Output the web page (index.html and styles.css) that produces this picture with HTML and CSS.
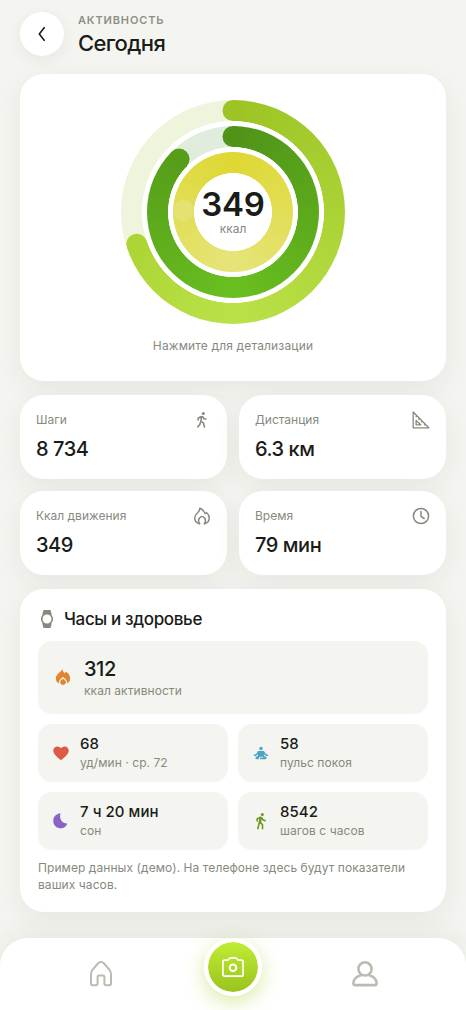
FILE: index.html
```html
<!DOCTYPE html>
<html lang="ru">
<head>
<meta charset="utf-8">
<title>Активность</title>
<link rel="stylesheet" href="styles.css">
</head>
<body>
<div class="screen">
  <header class="header">
    <button class="back" aria-label="Назад">
      <svg width="20" height="20" viewBox="0 0 20 20" fill="none" stroke="#1a1c18" stroke-width="1.6" stroke-linecap="round" stroke-linejoin="round"><path d="M12.200 3.700 7.300 10l4.900 6.300"/></svg>
    </button>
    <div class="heading">
      <div class="eyebrow">АКТИВНОСТЬ</div>
      <h1 class="title">Сегодня</h1>
    </div>
  </header>

  <main class="content">
    <section class="card rings-card">
      <div class="rings">
        <div class="ring ring-outer"></div>
        <div class="ring ring-middle"></div>
        <div class="ring ring-inner"></div>
        <svg class="ring caps" width="224" height="224" viewBox="0 0 224 224">
          <circle cx="112" cy="10.5" r="10.5" fill="#9dc424"/>
          <circle cx="15.7" cy="144.2" r="10.5" fill="#aed536"/>
          <circle cx="112" cy="36.5" r="10.5" fill="#4f9318"/>
          <circle cx="58.1" cy="59.1" r="10.5" fill="#569d1a"/>
          <circle cx="62.5" cy="110.3" r="10.5" fill="#e6e272"/>
        </svg>
        <div class="ring-label">
          <div class="ring-value">349</div>
          <div class="ring-unit">ккал</div>
        </div>
      </div>
      <div class="hint">Нажмите для детализации</div>
    </section>

    <section class="stats">
      <article class="card stat">
        <div class="stat-top"><span>Шаги</span>
          <svg width="18" height="18" viewBox="0 0 18 18" fill="none" stroke="#868a7e" stroke-width="1.6" stroke-linecap="round" stroke-linejoin="round"><circle cx="10.300" cy="2.400" r="1.500" fill="#868a7e" stroke="none"/><path d="M5.200 8.900V7.100l3.300-1.500L7.900 10l2.600 2.200.9 3.700M7.400 11.500 6.800 13.600l-2 2.200M9.600 5.800l1.400 1.900 2 .3"/></svg>
        </div>
        <div class="stat-value">8 734</div>
      </article>
      <article class="card stat">
        <div class="stat-top"><span>Дистанция</span>
          <svg width="18" height="18" viewBox="0 0 18 18" fill="none" stroke="#868a7e" stroke-width="1.3" stroke-linejoin="round"><path d="M1.200 1v15.800h15.600zM4.100 9.500v4.300h4.700zM3.600 5.700 5.200 4.300M6.300 8.400l1.600-1.400M9.200 11.300l1.600-1.400M12.100 14.200l1.600-1.400"/></svg>
        </div>
        <div class="stat-value">6.3 км</div>
      </article>
      <article class="card stat">
        <div class="stat-top"><span>Ккал движения</span>
          <svg width="18" height="18" viewBox="0 0 18 18" fill="none" stroke="#868a7e" stroke-width="1.500" stroke-linecap="round" stroke-linejoin="round"><path d="M6.600 16.700C3.500 16 1.700 13.800 1.700 11c0-2.500 1.400-3.900 3-5.300C6.200 4.400 6.900 3.100 6.700 1.200c2.600.9 4.700 2.900 5.400 5.400.6-.2 1-.5 1.300-1.100 1.900 1.500 2.900 3.400 2.900 5.500 0 2.900-1.800 5-4.900 5.700"/><path d="M6.600 16.700c-1.400-2.100-1.300-4.300.1-6 .7-.8 1.400-1.300 2.300-1.300s1.600.5 2.300 1.300c1.400 1.700 1.500 3.900.1 6"/></svg>
        </div>
        <div class="stat-value">349</div>
      </article>
      <article class="card stat">
        <div class="stat-top"><span>Время</span>
          <svg width="18" height="18" viewBox="0 0 18 18" fill="none" stroke="#868a7e" stroke-width="1.500" stroke-linecap="round" stroke-linejoin="round"><circle cx="9" cy="9" r="7.600"/><path d="M9 4.600V9.400l3.200 2.100"/></svg>
        </div>
        <div class="stat-value">79 мин</div>
      </article>
    </section>

    <section class="card health">
      <div class="health-head">
        <svg width="18" height="18" viewBox="0 0 18 18"><path fill="#868a7e" d="M5.500 0h7l1.300 4.800H4.200zM5.500 18h7l1.300-4.800H4.200z"/><circle cx="9" cy="9" r="5.300" fill="#fff" stroke="#868a7e" stroke-width="1.600"/></svg>
        <h2 class="health-title">Часы и здоровье</h2>
      </div>
      <div class="tile tile-wide">
        <svg width="18" height="18" viewBox="-.6 -.6 19.200 19.200"><path fill="#e08530" d="M8.300.5c.2 1.900 1.100 3 2.500 4.700.6-.5.900-1.100.9-2 2.800 1.600 4.900 3.900 4.900 7.400 0 3.200-2.400 6.200-7.600 6.200s-7.600-3-7.600-6.200c0-2.700 1.200-4.300 3.500-6.200C6.700 3 7.800 2 8.300.5z"/><path fill="#f3f4ef" d="M4.700 17.300c-.9-3.600.7-6.100 4.300-8.400 3.600 2.300 5.200 4.800 4.300 8.400z"/><path fill="#e08530" d="M9 10.900c2.300 1.500 3 2.500 3 3.800 0 1.600-1.200 2.700-3 2.700s-3-1.100-3-2.700c0-1.300.7-2.300 3-3.800z"/></svg>
        <div><div class="wide-value">312</div><div class="tile-label">ккал активности</div></div>
      </div>
      <div class="tiles">
        <div class="tile">
          <svg width="18" height="18" viewBox="0 0 18 18"><path fill="#dc5b44" d="M9 16.200C4 12.300 1.300 9.600 1.300 6.500c0-2.300 1.700-4 3.900-4C6.700 2.500 8.200 3.300 9 4.300c.8-1 2.300-1.800 3.800-1.800 2.200 0 3.900 1.700 3.900 4 0 3.100-2.700 5.800-7.700 9.700z"/></svg>
          <div><div class="tile-value">68</div><div class="tile-label">уд/мин · ср. 72</div></div>
        </div>
        <div class="tile">
          <svg width="18" height="18" viewBox="0 0 18 18" fill="#4ea3c4"><circle cx="9" cy="4.500" r="1.700"/><path d="M6.900 7h4.200c.9 0 1.300.5 1.600 1.300.6 1.500 1.700 2.200 3.500 2.400v1.400c-1.900-.1-3.300-.6-4.200-1.900v1.700l2 .8c.9.3 1 2.500-.8 2.500H7.800c0-1.300.6-1.800 1.700-1.800h1.700v-.6H9c-1.400 0-2.300.8-2.300 2.400H4.900c-1.900 0-1.800-2.200-.9-2.500l2-.8v-1.700c-.9 1.300-2.300 1.800-4.200 1.900v-1.400c1.800-.2 2.900-.9 3.500-2.400C5.600 7.500 6 7 6.900 7z"/></svg>
          <div><div class="tile-value">58</div><div class="tile-label">пульс покоя</div></div>
        </div>
        <div class="tile">
          <svg width="18" height="18" viewBox="0 0 18 18"><path fill="#8b62c8" d="M8.600 1.300c-.9 2.600-.7 5.400.9 7.500 1.300 1.800 3.400 2.800 5.800 2.700-.9 3-3.300 4.800-6.300 4.800-4.300 0-7.700-3.200-7.700-7.400 0-4.400 3.200-7.300 7.300-7.600z"/></svg>
          <div><div class="tile-value">7 ч 20 мин</div><div class="tile-label">сон</div></div>
        </div>
        <div class="tile">
          <svg width="18" height="18" viewBox="0 0 18 18" fill="none" stroke="#6f9620" stroke-width="1.600" stroke-linecap="butt" stroke-linejoin="round"><circle cx="10.300" cy="2.400" r="1.500" fill="#6f9620" stroke="none"/><path d="M5.200 9.600V6.800l3.500-1.600L7.200 11l-1.500 6.200M8 10.400l2.500 2.200v4.600M9.600 5.500c.6 1.900 2 3.100 4.200 3.300"/><path fill="#6f9620" stroke="none" d="m7.500 5.500 2.400.3-.8 5.500-2.400-.3z"/></svg>
          <div><div class="tile-value">8542</div><div class="tile-label">шагов с часов</div></div>
        </div>
      </div>
      <p class="note">Пример данных (демо). На телефоне здесь будут показатели<br>ваших часов.</p>
    </section>
  </main>

  <nav class="nav">
    <svg class="nav-icon" width="30" height="30" viewBox="0 0 30 30" fill="none" stroke="#b9bdb0" stroke-width="2" stroke-linejoin="round"><path d="M5 15c0-1.700.4-2.900 1.500-4.200l5.400-6.300c1.700-2 4.500-2 6.200 0l5.400 6.300C24.600 12.100 25 13.300 25 15v9.500c0 1.100-.8 1.800-1.800 1.800h-3c-1.100 0-1.800-.7-1.800-1.800v-6.400c0-1-.6-1.500-1.500-1.500h-3.800c-.9 0-1.500.5-1.500 1.500v6.400c0 1.100-.7 1.800-1.800 1.800h-3c-1 0-1.800-.7-1.800-1.800z"/></svg>
    <button class="fab" aria-label="Камера">
      <svg width="24" height="24" viewBox="0 0 24 24" fill="none" stroke="#fff" stroke-width="1.700" stroke-linejoin="round"><path d="M3.600 5.100h2.900c.9 0 1.200-.4 1.500-1.100.3-.8.800-1.100 1.600-1.100h4.800c.8 0 1.300.3 1.600 1.100.3.700.6 1.100 1.500 1.100h2.900c1.100 0 1.700.6 1.700 1.700v12.700c0 1.100-.6 1.700-1.700 1.700H3.600c-1.100 0-1.700-.6-1.700-1.700V6.800c0-1.100.6-1.700 1.700-1.700z"/><circle cx="12" cy="12.800" r="3.300" stroke-width="2"/></svg>
    </button>
    <svg class="nav-icon" width="30" height="30" viewBox="0 0 30 30" fill="none" stroke="#b9bdb0" stroke-width="2.600" stroke-linejoin="round"><circle cx="15" cy="9.900" r="6.600"/><path d="M11 16.300c-4.400 1.200-7.600 4.300-7.600 8 0 1.300.7 1.800 1.700 1.800h19.800c1 0 1.700-.5 1.700-1.800 0-3.700-3.200-6.800-7.600-8"/></svg>
  </nav>
</div>
</body>
</html>
```
FILE: styles.css
```css
* { box-sizing: border-box; }
body {
  margin: 0;
  background: #f4f5f0;
  color: #1a1c18;
  font-family: Inter, "Noto Sans", sans-serif;
}
h1, h2, p { margin: 0; }
button { border: 0; padding: 0; display: grid; place-items: center; }
svg { display: block; flex: none; }

.screen { height: 1010px; display: flex; flex-direction: column; overflow: hidden; }

.header { display: flex; align-items: center; gap: 14px; padding: 12px 20px 0; }
.back {
  width: 44px; height: 44px; border-radius: 50%;
  background: #fff;
  box-shadow: 0 4px 16px rgba(40, 45, 30, .07);
}
.eyebrow { font-size: 11px; line-height: 16px; font-weight: 600; letter-spacing: .85px; color: #8c9085; }
.title { font-size: 22px; line-height: 26px; font-weight: 500; letter-spacing: -.6px; margin-top: 2px; }

.content { display: flex; flex-direction: column; gap: 14px; padding: 18px 20px 0; }
.card { background: #fff; border-radius: 24px; box-shadow: 0 8px 28px rgba(40, 45, 30, .065); }

.rings-card { height: 307px; padding-top: 26px; display: flex; flex-direction: column; align-items: center; }
.rings { display: grid; place-items: center; width: 224px; height: 224px; }
.rings > * { grid-area: 1 / 1; }
.ring { border-radius: 50%; }
.ring-outer {
  width: 224px; height: 224px;
  background: radial-gradient(circle, #fff 90.7px, transparent 91.3px),
    conic-gradient(#9dc424, #bae147 180deg, #aed536 251.500deg, #eff5dc 251.500deg);
}
.ring-middle {
  width: 172px; height: 172px;
  background: radial-gradient(circle, #fff 64.7px, transparent 65.3px),
    conic-gradient(#4f9318, #69bf20 180deg, #569d1a 314.500deg, #e1eddc 314.500deg);
}
.ring-inner {
  width: 120px; height: 120px;
  background: radial-gradient(circle, #fff 38.700px, transparent 39.300px),
    conic-gradient(#ddd832, #e6e47a 180deg, #ddd832);
}
.ring-label { text-align: center; z-index: 1; }
.ring-value { font-size: 33px; line-height: 34px; font-weight: 600; letter-spacing: -.2px; }
.ring-unit { font-size: 12px; line-height: 16px; color: #868a7e; }
.hint { margin-top: 14px; font-size: 12px; line-height: 16px; letter-spacing: .15px; color: #868a7e; }

.stats { display: grid; grid-template-columns: 1fr 1fr; gap: 12px; }
.stat { height: 84px; padding: 16px; }
.stat-top { display: flex; justify-content: space-between; font-size: 12px; line-height: 18px; color: #868a7e; }
.stat-value { font-size: 20px; line-height: 26px; font-weight: 550; margin-top: 7px; letter-spacing: -.45px; }

.health { height: 323px; padding: 18px 18px 0; }
.health-head { display: flex; align-items: center; gap: 8px; height: 24px; }
.health-title { font-size: 17px; line-height: 24px; font-weight: 500; letter-spacing: -.36px; }
.tile {
  display: flex; align-items: center; gap: 10px;
  height: 58px; padding: 0 14px 1px;
  border-radius: 14px;
  background: #f4f5f0;
}
.tile-wide { height: 73px; padding-left: 16px; gap: 12px; margin: 10px 0; }
.tiles { display: grid; grid-template-columns: 1fr 1fr; gap: 10px; }
.wide-value { font-size: 20px; line-height: 26px; font-weight: 550; letter-spacing: -.45px; }
.tile-value { font-size: 15px; line-height: 20px; font-weight: 550; letter-spacing: .05px; }
.tile-label { font-size: 12px; line-height: 17px; letter-spacing: .06px; color: #868a7e; }
.note { margin-top: 9px; font-size: 12px; line-height: 17px; letter-spacing: .075px; color: #868a7e; white-space: nowrap; }

.nav {
  margin-top: auto; height: 72px;
  display: flex; justify-content: space-between; padding: 0 86px;
  background: #fff;
  border-radius: 28px 28px 0 0;
  box-shadow: 0 -6px 24px rgba(40, 45, 30, .06);
}
.nav-icon { margin-top: 21px; }
.fab {
  width: 58px; height: 58px; border-radius: 50%;
  border: 4px solid #fff;
  background: linear-gradient(#bfed32, #9bc31f) padding-box;
  box-shadow: 0 6px 20px rgba(160, 205, 30, .4);
}
```
